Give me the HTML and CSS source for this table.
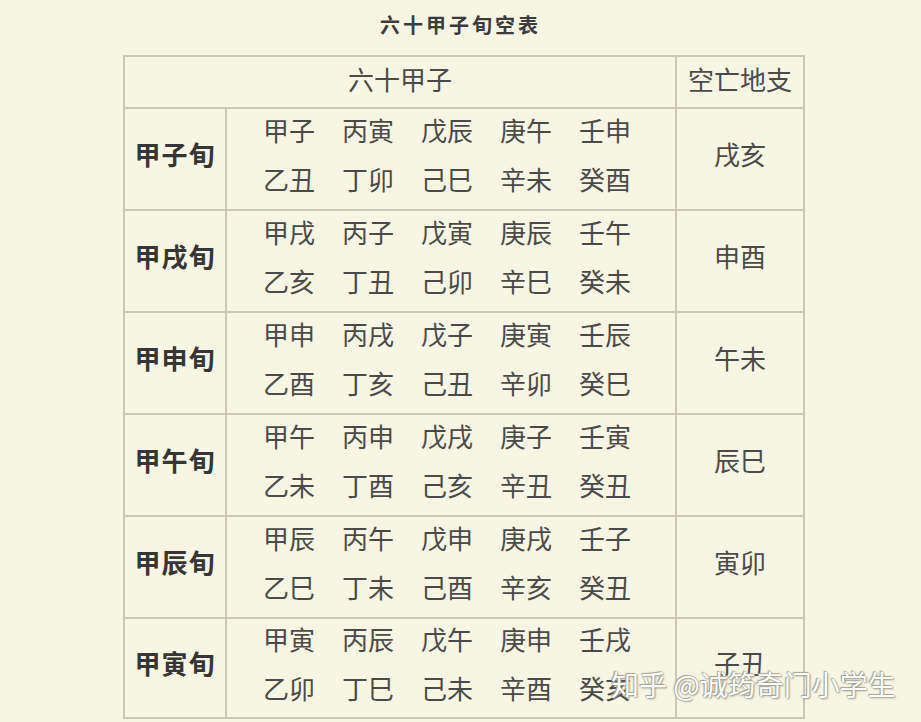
FILE: index.html
```html
<!DOCTYPE html>
<html lang="zh-CN">
<head>
<meta charset="utf-8">
<title>六十甲子旬空表</title>
<link rel="stylesheet" href="styles.css">
</head>
<body>
<div class="page">
  <h1 class="title">六十甲子旬空表</h1>
  <table class="xk">
    <colgroup><col class="c1"><col class="c2"><col class="c3"></colgroup>
    <thead>
      <tr><th colspan="2" class="hd">六十甲子</th><th class="hd">空亡地支</th></tr>
    </thead>
    <tbody>
      <tr>
        <td class="lab">甲子旬</td>
        <td class="mid"><div class="gz"><span>甲子</span><span>丙寅</span><span>戊辰</span><span>庚午</span><span>壬申</span><span>乙丑</span><span>丁卯</span><span>己巳</span><span>辛未</span><span>癸酉</span></div></td>
        <td class="kw">戌亥</td>
      </tr>
      <tr>
        <td class="lab">甲戌旬</td>
        <td class="mid"><div class="gz"><span>甲戌</span><span>丙子</span><span>戊寅</span><span>庚辰</span><span>壬午</span><span>乙亥</span><span>丁丑</span><span>己卯</span><span>辛巳</span><span>癸未</span></div></td>
        <td class="kw">申酉</td>
      </tr>
      <tr>
        <td class="lab">甲申旬</td>
        <td class="mid"><div class="gz"><span>甲申</span><span>丙戌</span><span>戊子</span><span>庚寅</span><span>壬辰</span><span>乙酉</span><span>丁亥</span><span>己丑</span><span>辛卯</span><span>癸巳</span></div></td>
        <td class="kw">午未</td>
      </tr>
      <tr>
        <td class="lab">甲午旬</td>
        <td class="mid"><div class="gz"><span>甲午</span><span>丙申</span><span>戊戌</span><span>庚子</span><span>壬寅</span><span>乙未</span><span>丁酉</span><span>己亥</span><span>辛丑</span><span>癸丑</span></div></td>
        <td class="kw">辰巳</td>
      </tr>
      <tr>
        <td class="lab">甲辰旬</td>
        <td class="mid"><div class="gz"><span>甲辰</span><span>丙午</span><span>戊申</span><span>庚戌</span><span>壬子</span><span>乙巳</span><span>丁未</span><span>己酉</span><span>辛亥</span><span>癸丑</span></div></td>
        <td class="kw">寅卯</td>
      </tr>
      <tr class="last">
        <td class="lab">甲寅旬</td>
        <td class="mid"><div class="gz"><span>甲寅</span><span>丙辰</span><span>戊午</span><span>庚申</span><span>壬戌</span><span>乙卯</span><span>丁巳</span><span>己未</span><span>辛酉</span><span>癸亥</span></div></td>
        <td class="kw">子丑</td>
      </tr>
    </tbody>
  </table>
  <div class="watermark">知乎 @诚筠奇门小学生</div>
</div>
</body>
</html>
```

FILE: styles.css
```css
html, body {
  margin: 0;
  padding: 0;
  background: #f7f5e3;
}
body {
  font-family: "Noto Sans CJK SC", "Noto Sans", sans-serif;
  color: #4a4a4a;
  width: 921px;
  height: 722px;
  overflow: hidden;
}
.page {
  position: relative;
  width: 921px;
  height: 722px;
}
.title {
  margin: 0;
  height: 55px;
  padding-top: 11px;
  box-sizing: border-box;
  text-align: center;
  font-size: 20px;
  line-height: 28px;
  letter-spacing: 3px;
  font-weight: 700;
  color: #3c3c3c;
}
.xk {
  margin-left: 123px;
  border-collapse: collapse;
  table-layout: fixed;
  width: 682px;
}
.c1 { width: 102px; }
.c2 { width: 450px; }
.c3 { width: 128px; }
.xk th, .xk td {
  border: 2px solid #cbc8b5;
  padding: 0;
  text-align: center;
  vertical-align: middle;
}
.hd {
  height: 52px;
  font-size: 26px;
  font-weight: 400;
  color: #4a4a4a;
  line-height: 30px;
  box-sizing: border-box;
}
.xk th.hd { padding-bottom: 6px; }
.xk tbody tr { height: 102px; }
.xk tbody tr.last { height: 100px; }
.xk td.lab {
  font-size: 26px;
  font-weight: 700;
  color: #363636;
  letter-spacing: 1px;
  line-height: 36px;
  padding-bottom: 10px;
}
.xk td.kw {
  font-size: 26px;
  line-height: 36px;
  color: #4a4a4a;
  padding-bottom: 10px;
}
.gz {
  display: grid;
  grid-template-columns: repeat(5, 52px);
  column-gap: 27px;
  justify-content: center;
  padding-right: 8px;
  margin-top: -5px;
  margin-bottom: 5px;
  font-size: 26px;
  line-height: 49px;
  color: #4a4a4a;
}
.gz span { white-space: nowrap; }
.watermark {
  position: absolute;
  left: 611px;
  top: 664px;
  font-size: 28px;
  line-height: 40px;
  color: #ffffff;
  text-shadow: 0 0 1px #8a887c, 1px 1px 2px #9a988b, -1px -1px 1px #a9a797;
  white-space: nowrap;
}
```
